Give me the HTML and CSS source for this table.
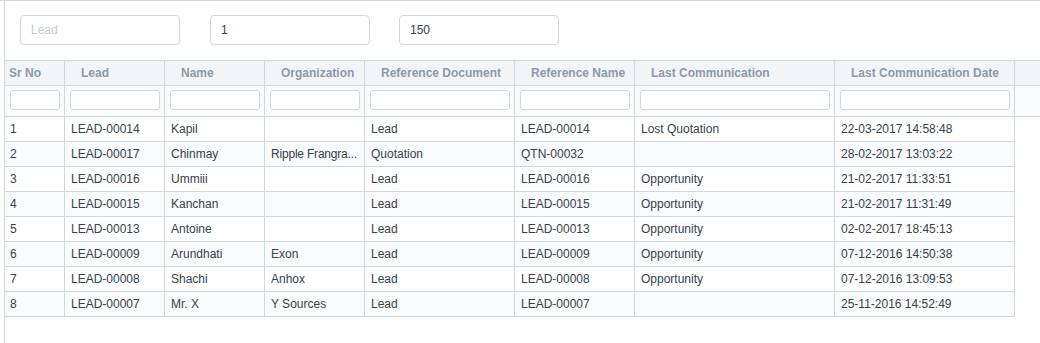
FILE: index.html
```html
<!DOCTYPE html>
<html>
<head>
<meta charset="utf-8">
<link rel="stylesheet" href="styles.css">
</head>
<body>
<div class="page">
  <div class="panel">
    <div class="filters">
      <input class="field" type="text" placeholder="Lead">
      <input class="field" type="text" value="1">
      <input class="field" type="text" value="150">
    </div>
    <table class="grid">
      <colgroup>
        <col class="c-sr"><col class="c-100"><col class="c-100"><col class="c-100"><col class="c-150"><col class="c-120"><col class="c-200"><col class="c-180"><col class="c-fill">
      </colgroup>
      <thead>
        <tr class="head">
          <th class="sr">Sr No</th>
          <th>Lead</th>
          <th>Name</th>
          <th>Organization</th>
          <th>Reference Document</th>
          <th>Reference Name</th>
          <th>Last Communication</th>
          <th>Last Communication Date</th>
          <th class="fill"></th>
        </tr>
        <tr class="filter-row">
          <td><input class="cell-input" type="text"></td>
          <td><input class="cell-input" type="text"></td>
          <td><input class="cell-input" type="text"></td>
          <td><input class="cell-input" type="text"></td>
          <td><input class="cell-input" type="text"></td>
          <td><input class="cell-input" type="text"></td>
          <td><input class="cell-input" type="text"></td>
          <td><input class="cell-input" type="text"></td>
          <td class="fill"></td>
        </tr>
      </thead>
      <tbody>
        <tr><td>1</td><td>LEAD-00014</td><td>Kapil</td><td></td><td>Lead</td><td>LEAD-00014</td><td>Lost Quotation</td><td>22-03-2017 14:58:48</td></tr>
        <tr><td>2</td><td>LEAD-00017</td><td>Chinmay</td><td class="tight">Ripple Frangra...</td><td>Quotation</td><td>QTN-00032</td><td></td><td>28-02-2017 13:03:22</td></tr>
        <tr><td>3</td><td>LEAD-00016</td><td>Ummiii</td><td></td><td>Lead</td><td>LEAD-00016</td><td>Opportunity</td><td>21-02-2017 11:33:51</td></tr>
        <tr><td>4</td><td>LEAD-00015</td><td>Kanchan</td><td></td><td>Lead</td><td>LEAD-00015</td><td>Opportunity</td><td>21-02-2017 11:31:49</td></tr>
        <tr><td>5</td><td>LEAD-00013</td><td>Antoine</td><td></td><td>Lead</td><td>LEAD-00013</td><td>Opportunity</td><td>02-02-2017 18:45:13</td></tr>
        <tr><td>6</td><td>LEAD-00009</td><td>Arundhati</td><td>Exon</td><td>Lead</td><td>LEAD-00009</td><td>Opportunity</td><td>07-12-2016 14:50:38</td></tr>
        <tr><td>7</td><td>LEAD-00008</td><td>Shachi</td><td>Anhox</td><td>Lead</td><td>LEAD-00008</td><td>Opportunity</td><td>07-12-2016 13:09:53</td></tr>
        <tr><td>8</td><td>LEAD-00007</td><td>Mr. X</td><td>Y Sources</td><td>Lead</td><td>LEAD-00007</td><td></td><td>25-11-2016 14:52:49</td></tr>
      </tbody>
    </table>
  </div>
</div>
</body>
</html>
```
FILE: styles.css
```css
* { box-sizing: border-box; }
html, body { margin: 0; padding: 0; background: #fff; }
body {
  font-family: "Liberation Sans", Arial, sans-serif;
  font-size: 12px;
  color: #36414c;
  overflow: hidden;
  width: 1040px;
  height: 343px;
}
.page {
  border-top: 1px solid #d1d8dd;
  height: 343px;
}
.panel {
  margin-left: 4px;
  border-left: 1px solid #d1d8dd;
  height: 342px;
}
.filters {
  display: flex;
  padding: 14px 0 15px 15px;
}
.field {
  width: 160px;
  height: 30px;
  border: 1px solid #d1d8dd;
  border-radius: 4px;
  padding: 0 10px;
  font-family: inherit;
  font-size: 12px;
  color: #36414c;
  background: #fff;
  outline: none;
  margin-right: 30px;
}
.field:nth-child(3) { margin-left: -1px; }
.field::placeholder { color: #c3cbd3; }
.grid {
  border-collapse: separate;
  border-spacing: 0;
  table-layout: fixed;
  width: 1080px;
  border-top: 1px solid #d1d8dd;
}
.c-sr { width: 60px; }
.c-100 { width: 100px; }
.c-150 { width: 150px; }
.c-120 { width: 120px; }
.c-200 { width: 200px; }
.c-180 { width: 180px; }
.c-fill { width: 70px; }
.grid th, .grid td {
  border-right: 1px solid #d1d8dd;
  border-bottom: 1px solid #d1d8dd;
  white-space: nowrap;
  overflow: hidden;
}
.grid th.fill, .grid td.fill { border-right: none; }
.head th {
  height: 25px;
  background: #f2f5f8;
  color: #8d99a6;
  font-weight: bold;
  text-align: left;
  padding: 0 4px 0 16px;
  vertical-align: middle;
}
.head th.sr { padding-left: 4px; }
.filter-row td {
  height: 31px;
  background: #f9fafb;
  padding: 4px 4px 0 5px;
  vertical-align: top;
}
.cell-input {
  display: block;
  width: 100%;
  height: 20px;
  border: 1px solid #d1d8dd;
  border-radius: 3px;
  background: #fff;
  outline: none;
  margin: 0;
  padding: 0 4px;
}
tbody td {
  height: 25px;
  padding: 0 6px;
  vertical-align: middle;
  line-height: 24px;
}
tbody td.tight { padding-right: 0; letter-spacing: -0.2px; }
tbody td:first-child { padding-left: 5px; }
tbody tr:nth-child(even) td { background: #f9fafb; }
```
